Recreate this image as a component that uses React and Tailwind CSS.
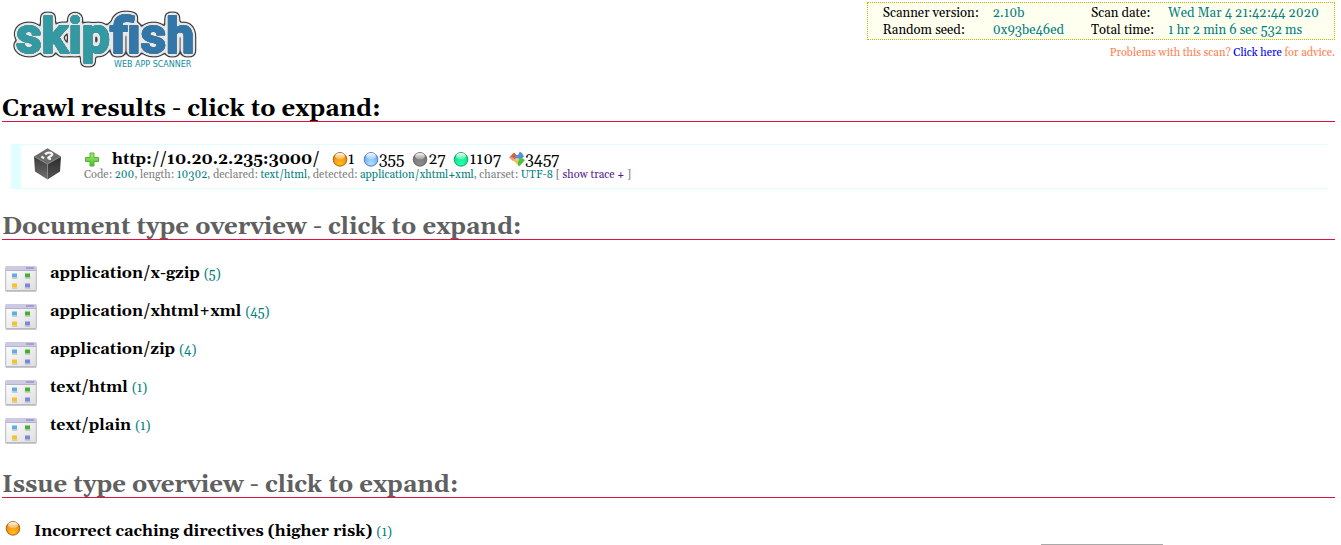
import React from "react";

const DOC_TYPES = [
  { name: "application/x-gzip", count: 5 },
  { name: "application/xhtml+xml", count: 45 },
  { name: "application/zip", count: 4 },
  { name: "text/html", count: 1 },
  { name: "text/plain", count: 1 },
];

const ORBS = {
  high: { rim: "#9a4a10", base: "#f08a00", glow: "#ffc020" },
  medium: { rim: "#3565b5", base: "#6cb0fa", glow: "#b0e0ff" },
  low: { rim: "#5c5c5c", base: "#757575", glow: "#8c8c8c" },
  warn: { rim: "#0a8a55", base: "#00e88c", glow: "#30ffb0" },
};

const COUNTS = [
  { kind: "high", value: 1 },
  { kind: "medium", value: 355 },
  { kind: "low", value: 27 },
  { kind: "warn", value: 1107 },
  { kind: "info", value: 3457 },
];

function Logo() {
  return (
    <svg width="205" height="76" viewBox="0 0 205 76" role="img" aria-label="skipfish web app scanner">
      <defs>
        {/* Stacks a thin grey edge, a pale halo and a dark rim behind the lettering. */}
        <filter id="halo" filterUnits="userSpaceOnUse" x="0" y="0" width="205" height="76" colorInterpolationFilters="sRGB">
          <feGaussianBlur in="SourceAlpha" stdDeviation="2.1" result="wide" />
          <feComponentTransfer in="wide" result="rimMask">
            <feFuncA type="linear" slope="20" intercept="-0.5" />
          </feComponentTransfer>
          <feComponentTransfer in="wide" result="paleMask">
            <feFuncA type="linear" slope="12" intercept="-1.1" />
          </feComponentTransfer>
          <feGaussianBlur in="SourceAlpha" stdDeviation="0.5" result="near" />
          <feComponentTransfer in="near" result="edgeMask">
            <feFuncA type="linear" slope="2.5" intercept="-0.3" />
          </feComponentTransfer>
          <feFlood floodColor="#3c3c3c" />
          <feComposite in2="rimMask" operator="in" result="rim" />
          <feFlood floodColor="#e8e8e8" />
          <feComposite in2="paleMask" operator="in" result="pale" />
          <feFlood floodColor="#8a8a8a" />
          <feComposite in2="edgeMask" operator="in" result="edge" />
          <feMerge>
            <feMergeNode in="rim" />
            <feMergeNode in="pale" />
            <feMergeNode in="edge" />
            <feMergeNode in="SourceGraphic" />
          </feMerge>
        </filter>
      </defs>
      <g
        fontFamily="Roboto, sans-serif"
        fontWeight="700"
        fontSize="50"
        strokeLinejoin="round"
        strokeWidth="2"
        filter="url(#halo)"
      >
        <text x="14" y="51" fill="#3399a3" stroke="#3399a3">skip</text>
        <text x="108" y="51" fill="#3377a8" stroke="#3377a8">fish</text>
      </g>
      <text x="112" y="65" fontFamily="'DejaVu Sans', sans-serif" fontSize="8" fill="#0f8aa0">
        WEB APP SCANNER
      </text>
    </svg>
  );
}

function Orb({ kind, id }) {
  const c = ORBS[kind];
  return (
    <svg width="16" height="16" viewBox="0 0 16 16" aria-hidden="true" className="shrink-0">
      <defs>
        <radialGradient id={id + "b"} cx="50%" cy="80%" r="60%">
          <stop offset="0" stopColor={c.glow} />
          <stop offset="1" stopColor={c.base} />
        </radialGradient>
        <linearGradient id={id + "s"} x1="0" y1="0" x2="0" y2="1">
          <stop offset="0" stopColor="#fff" stopOpacity="0.95" />
          <stop offset="1" stopColor="#fff" stopOpacity="0.25" />
        </linearGradient>
      </defs>
      <circle cx="8" cy="8.4" r="6.8" fill={"url(#" + id + "b)"} stroke={c.rim} strokeWidth="0.8" />
      <ellipse cx="8" cy="5.2" rx="4.8" ry="3.1" fill={"url(#" + id + "s)"} />
    </svg>
  );
}

function InfoIcon() {
  return (
    <svg width="16" height="16" viewBox="0 0 16 16" aria-hidden="true" className="shrink-0">
      <path d="M0.2 6.5 L5 1.5 L9 5.5 L4.5 10 Z" fill="#d9603a" />
      <path d="M0.2 6.5 L3 6 L6 8.5 L4.5 10 Z" fill="#f0a080" />
      <path d="M6 4 L9 4 L10.8 0.5 L13 2 L15 5.5 L11 9 L6.5 7.5 Z" fill="#5a8fd6" />
      <path d="M4.5 9.5 L7 7 L9.5 9.5 L11 12 L9.5 15 Z" fill="#f0c840" />
      <path d="M9 9.5 L12 6.5 L16 9 L10.5 15.2 L9 14 Z" fill="#55c040" />
      <path d="M6 8 L9 6.8 L10.5 9 L8.5 10.5 Z" fill="#b9d0c8" />
    </svg>
  );
}

function BoxIcon() {
  return (
    <svg width="32" height="32" viewBox="0 0 32 32" aria-hidden="true" className="shrink-0">
      <defs>
        <linearGradient id="boxL" x1="0" y1="0" x2="0" y2="1">
          <stop offset="0" stopColor="#3a3a3a" />
          <stop offset="1" stopColor="#707070" />
        </linearGradient>
        <linearGradient id="boxR" x1="0" y1="0" x2="0" y2="1">
          <stop offset="0" stopColor="#2a2a2a" />
          <stop offset="1" stopColor="#555" />
        </linearGradient>
      </defs>
      <path d="M15.5 0.3 L29 8.5 L15.5 16 L2 8.5 Z" fill="#6c6c6c" />
      <path d="M2 8.5 L15.5 16 V31.5 L3 23.5 Z" fill="url(#boxL)" />
      <path d="M29 8.5 L15.5 16 V31.5 L28 23.5 Z" fill="url(#boxR)" />
      <path d="M2 8.5 L15.5 16 L29 8.5 M15.5 16 V31" fill="none" stroke="#8c8c8c" strokeWidth="0.8" />
      <path d="M13.5 5.8 C16 4.2 20 4.8 20.6 6.8 C21 8.4 18.2 8.6 16.6 9.2 C15.2 9.8 16.4 11.2 18.4 11.4" fill="none" stroke="#f4f4f4" strokeWidth="2.2" transform="rotate(-12 16 8.5)" />
      <path d="M9.4 8.4 L12 10.4" stroke="#f4f4f4" strokeWidth="2" />
    </svg>
  );
}

function PlusIcon() {
  return (
    <svg width="16" height="16" viewBox="0 0 16 16" aria-hidden="true" className="shrink-0">
      <defs>
        <linearGradient id="plus" x1="0" y1="0" x2="0" y2="1">
          <stop offset="0" stopColor="#a8ec78" />
          <stop offset="1" stopColor="#48c020" />
        </linearGradient>
      </defs>
      <path d="M6 2 H10 V6.5 H14.5 V10.5 H10 V15 H6 V10.5 H1.5 V6.5 H6 Z" fill="url(#plus)" stroke="#58b038" strokeLinejoin="round" />
    </svg>
  );
}

function WindowIcon() {
  return (
    <svg width="32" height="32" viewBox="0 -1 32 32" aria-hidden="true" className="shrink-0">
      <defs>
        <linearGradient id="win" x1="0" y1="0" x2="1" y2="1">
          <stop offset="0" stopColor="#ffffff" />
          <stop offset="1" stopColor="#dedede" />
        </linearGradient>
      </defs>
      <rect x="0.5" y="27" width="31" height="2" fill="#b4b4b4" opacity="0.7" />
      <rect x="0.7" y="3.5" width="30.6" height="24" rx="1" fill="url(#win)" stroke="#b8b8c4" />
      <rect x="0.7" y="3" width="30.6" height="4.5" rx="1" fill="#cdcbe4" />
      <path d="M1 7.5 H31" stroke="#a9a7c6" strokeWidth="0.8" />
      <rect x="21" y="4" width="8" height="2" fill="#a3a0cc" />
      <g>
        <rect x="7" y="10.5" width="5" height="4" fill="#62aee2" />
        <rect x="20" y="10.5" width="5" height="4" fill="#45b030" />
        <rect x="7" y="20.5" width="5" height="4" fill="#f6c22a" />
        <rect x="20" y="20.5" width="5" height="4" fill="#7c86e0" />
      </g>
      <path d="M7 15.3 H12.5 M20 15.3 H25.5 M7 25.3 H12.5 M20 25.3 H25.5" stroke="#b9b9b9" strokeWidth="0.8" />
    </svg>
  );
}

function SectionTitle({ children, dim }) {
  return (
    <h2 className={"border-b border-[#dc143c] text-[24px] leading-[23px] font-bold " + (dim ? "text-[#606060]" : "text-black")}>
      <button type="button" className="block cursor-pointer text-left">{children}</button>
    </h2>
  );
}

function ScanInfo() {
  return (
    <div className="flex flex-col items-end gap-[5px]">
      <div className="border border-dotted border-[#bcbc00] bg-[#fffff0] px-[15px] pt-[2px]">
        <table className="text-[13px] leading-[17px] text-[#008080]">
          <tbody>
            <tr>
              <th scope="row" className="pr-[14px] text-left font-normal text-black">Scanner version:</th>
              <td className="pr-[27px]">2.10b</td>
              <th scope="row" className="pr-[14px] text-left font-normal text-black">Scan date:</th>
              <td>Wed Mar 4 21:42:44 2020</td>
            </tr>
            <tr>
              <th scope="row" className="pr-[14px] text-left font-normal text-black">Random seed:</th>
              <td className="pr-[27px]">0x93be46ed</td>
              <th scope="row" className="pr-[14px] text-left font-normal text-black">Total time:</th>
              <td>1 hr 2 min 6 sec 532 ms</td>
            </tr>
          </tbody>
        </table>
      </div>
      <p className="text-[11px] leading-4 text-[#ff7f50]">
        Problems with this scan? <a href="#advice" className="text-[#0000ee]">Click here</a> for advice.
      </p>
    </div>
  );
}

export default function App() {
  return (
    <main className="bg-white pt-[2px] pr-[6px] pl-[2px] font-[Georgia,Gelasio,'Liberation_Serif',serif] text-black">
      <header className="flex items-start justify-between">
        <Logo />
        <ScanInfo />
      </header>

      <section className="pt-5">
        <SectionTitle>Crawl results - click to expand:</SectionTitle>
        <div className="mt-[22px] mr-2 ml-[9px] flex gap-5 border-y border-l-10 border-[#e0ffff] pt-[3px] pb-[6px] pl-[11px]">
          <BoxIcon />
          <div className="pt-[2px]">
            <div className="flex items-center gap-3 text-[16px] leading-[18px]">
              <button type="button" className="flex cursor-pointer items-center gap-3 font-bold">
                <PlusIcon />
                http://10.20.2.235:3000/
              </button>
              <ul className="flex gap-2">
                {COUNTS.map((c) => (
                  <li key={c.kind} className="flex items-center">
                    {c.kind === "info" ? <InfoIcon /> : <Orb kind={c.kind} id={"c-" + c.kind} />}
                    {c.value}
                  </li>
                ))}
              </ul>
            </div>
            <p className="text-[11px] leading-[14px] text-[#808080]">
              Code: <span className="text-[#008080]">200</span>, length: <span className="text-[#008080]">10302</span>, declared:{" "}
              <span className="text-[#008080]">text/html</span>, detected:{" "}
              <span className="text-[#008080]">application/xhtml+xml</span>, charset:{" "}
              <span className="text-[#008080]">UTF-8</span> [ <a href="#trace" className="text-[#551a8b]">show trace +</a> ]
            </p>
          </div>
        </div>
      </section>

      <section className="pt-[27px]">
        <SectionTitle dim>Document type overview - click to expand:</SectionTitle>
        <ul className="mt-[22px] ml-[3px]">
          {DOC_TYPES.map((d) => (
            <li key={d.name} className="flex h-[38px] gap-[13px]">
              <WindowIcon />
              <p className="text-[16px] leading-[22px] font-bold">
                {d.name} <span className="text-[13px] font-normal text-[#008080]">({d.count})</span>
              </p>
            </li>
          ))}
        </ul>
      </section>

      <section className="pt-[22px]">
        <SectionTitle dim>Issue type overview - click to expand:</SectionTitle>
        <ul className="mt-[22px] ml-[3px]">
          <li className="flex items-start gap-[13px]">
            <Orb kind="high" id="issue" />
            <p className="text-[16px] leading-[22px] font-bold">
              Incorrect caching directives (higher risk) <span className="text-[13px] font-normal text-[#008080]">(1)</span>
            </p>
          </li>
        </ul>
      </section>

      <div className="fixed right-[178px] bottom-0 h-px w-[122px] bg-[#a9a9a9]" />
    </main>
  );
}
